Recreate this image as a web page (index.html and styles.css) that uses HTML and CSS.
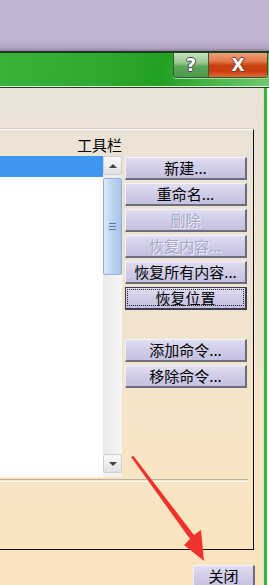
FILE: index.html
```html
<!DOCTYPE html>
<html lang="zh">
<head>
<meta charset="utf-8">
<title>自定义</title>
<link rel="stylesheet" href="styles.css">
</head>
<body>
<div class="screen">
  <div class="desktop"></div>
  <div class="titlebar">
    <div class="caption-buttons">
      <div class="btn-help">?</div>
      <div class="btn-close">X</div>
    </div>
  </div>
  <div class="dialog">
    <div class="groupbox">
      <div class="grid">
        <div class="label">工具栏</div>
        <div></div>
        <div class="listarea">
          <div class="list">
            <div class="row selected"></div>
          </div>
          <div class="scrollbar">
            <div class="sb-btn"><span class="tri up"></span></div>
            <div class="sb-thumb"><span class="grip"></span></div>
            <div class="sb-track"></div>
            <div class="sb-btn"><span class="tri down"></span></div>
            <div class="sb-tail"></div>
          </div>
        </div>
        <div class="buttons">
          <div class="btn">新建...</div>
          <div class="btn">重命名...</div>
          <div class="btn disabled">删除</div>
          <div class="btn disabled">恢复内容...</div>
          <div class="btn">恢复所有内容...</div>
          <div class="btn focused"><span class="focus-ring">恢复位置</span></div>
          <div class="btn-spacer"></div>
          <div class="btn">添加命令...</div>
          <div class="btn">移除命令...</div>
        </div>
      </div>
      <div class="separator"></div>
    </div>
    <div class="footer">
      <div class="btn close-btn">关闭</div>
    </div>
  </div>
  <svg class="arrow" width="269" height="585" viewBox="0 0 269 585">
    <polygon points="131,457 133.5,456 194,535 201,530 204,561 184,545 190,539" fill="#f0312c"/>
  </svg>
</div>
</body>
</html>
```
FILE: styles.css
```css
html, body {
  margin: 0;
  padding: 0;
}
body {
  width: 269px;
  height: 585px;
  overflow: hidden;
  font-family: "Noto Sans CJK SC", "Liberation Sans", sans-serif;
  font-size: 15px;
  color: #000;
}
.screen {
  position: relative;
  width: 269px;
  height: 585px;
  overflow: hidden;
  display: flex;
  flex-direction: column;
}
.desktop {
  height: 51px;
  flex: none;
  background: linear-gradient(#c4b4d4 0px, #c4b4d4 40px, #b4a4c2 48px, #8e7f9a 51px);
}
.titlebar {
  height: 33px;
  flex: none;
  border-top: 2px solid #1c3a1c;
  border-bottom: 1px solid #e6f4e0;
  box-shadow: 0 1px 0 #1f3f1f;
  background: linear-gradient(100deg, #3ab23a 0%, #2ea82e 40%, #22a022 60%, #46b646 78%, #70c870 100%);
  display: flex;
  justify-content: flex-end;
  align-items: flex-start;
}
.caption-buttons {
  display: flex;
  margin-right: 1px;
  height: 24px;
  border: 1px solid #2c5a2c;
  border-top: none;
  border-radius: 0 0 4px 4px;
  overflow: hidden;
  box-shadow: 0 1px 0 #a8dca0;
}
.btn-help {
  width: 34px;
  height: 24px;
  background: linear-gradient(#c8e2c0 0%, #9cc894 40%, #5ea45a 55%, #4c9a4c 100%);
  color: #fff;
  font-family: "DejaVu Sans", sans-serif;
  font-weight: bold;
  font-size: 18px;
  line-height: 24px;
  text-align: center;
  text-shadow: -1px 0 #445, 1px 0 #445, 0 -1px #445, 0 1px #445;
  border-right: 1px solid #3a5a3a;
}
.btn-close {
  width: 58px;
  height: 24px;
  background: linear-gradient(#eda080 0%, #e07848 35%, #c84010 52%, #c83c0c 75%, #e06a3a 100%);
  color: #fff;
  font-family: "DejaVu Sans", sans-serif;
  font-weight: bold;
  font-size: 17px;
  line-height: 24px;
  text-align: center;
  text-shadow: -1px 0 #7a3a2a, 1px 0 #7a3a2a, 0 -1px #7a3a2a, 0 1px #7a3a2a;
}
.dialog {
  flex: 1;
  margin-top: 1px;
  background: linear-gradient(#ebe2d8 0%, #efe4d2 40%, #f8e5c4 75%, #fbe4bf 100%);
  border-right: 3px solid #3cb43c;
  box-shadow: inset -1px 0 0 #cfe8c8;
  margin-right: 2px;
  display: flex;
  flex-direction: column;
}
.groupbox {
  margin-top: 41px;
  margin-left: -10px;
  width: 263px;
  height: 419px;
  border-top: 1px solid #ffffff;
  border-right: 1px solid #101010;
  border-bottom: 1px solid #101010;
  box-shadow: 0 -1px 0 #d8d0c4;
  box-sizing: content-box;
}
.grid {
  display: grid;
  grid-template-columns: 132px 122px;
  column-gap: 3px;
}
.label {
  text-align: right;
  height: 20px;
  line-height: 20px;
  margin-top: 5px;
  margin-bottom: 1px;
  padding-right: 0;
}
.listarea {
  display: flex;
  height: 321px;
}
.list {
  width: 113px;
  height: 321px;
  background: #fff;
}
.row.selected {
  height: 21px;
  background: #3d96f0;
}
.scrollbar {
  width: 19px;
  height: 321px;
  display: flex;
  flex-direction: column;
  background: #eeeeee;
}
.sb-btn {
  height: 19px;
  flex: none;
  box-sizing: border-box;
  border: 1px solid #cfcfcf;
  border-radius: 2px;
  background: linear-gradient(#fafafa, #e2e2e2);
  display: flex;
  align-items: center;
  justify-content: center;
}
.tri {
  width: 0;
  height: 0;
  border-left: 4px solid transparent;
  border-right: 4px solid transparent;
}
.tri.up {
  border-bottom: 4px solid #444;
}
.tri.down {
  border-top: 4px solid #444;
}
.sb-thumb {
  height: 97px;
  flex: none;
  margin-top: 3px;
  box-sizing: border-box;
  border: 1px solid #8fb0d8;
  border-radius: 2px;
  background: linear-gradient(90deg, #dbe8f8, #bcd4f0 50%, #a8c6ea);
  display: flex;
  align-items: center;
  justify-content: center;
}
.grip {
  width: 7px;
  height: 5px;
  border-top: 1px solid #5a7aa0;
  border-bottom: 1px solid #5a7aa0;
  background: linear-gradient(transparent 2px, #5a7aa0 2px, #5a7aa0 3px, transparent 3px);
}
.sb-track {
  flex: 1;
  background: linear-gradient(90deg, #eaeaea, #f6f6f6);
}
.sb-tail {
  height: 4px;
  flex: none;
  background: #f2f2f2;
}
.buttons {
  display: flex;
  flex-direction: column;
  padding-top: 1px;
}
.btn {
  height: 23px;
  box-sizing: border-box;
  margin-bottom: 3px;
  background: linear-gradient(#e0def2 0%, #d0cde8 50%, #c4c0e0 100%);
  border-top: 1px solid #f4f4fc;
  border-left: 1px solid #f0f0fa;
  border-right: 2px solid #6c6c7c;
  border-bottom: 2px solid #6c6c7c;
  text-align: center;
  line-height: 19px;
  font-size: 15px;
  white-space: nowrap;
}
.btn.disabled {
  color: #a6a6c6;
  text-shadow: 1px 1px 0 #f4f4ff;
}
.btn.focused {
  border: 1px solid #3c3c4c;
  border-right: 2px solid #3c3c4c;
  border-bottom: 2px solid #3c3c4c;
  padding: 1px;
  line-height: 17px;
}
.focus-ring {
  display: block;
  height: 17px;
  box-sizing: border-box;
  border: 1px dotted #222;
  line-height: 15px;
}
.btn-spacer {
  height: 26px;
}
.separator {
  margin-top: 2px;
  margin-left: 10px;
  width: 248px;
  height: 1px;
  border-top: 1px solid #b8b0a4;
  border-bottom: 1px solid #ffffff;
}
.footer {
  padding-top: 15px;
  padding-left: 193px;
}
.close-btn {
  width: 62px;
  height: 24px;
}
.arrow {
  position: absolute;
  left: 0;
  top: 0;
  pointer-events: none;
}
```
